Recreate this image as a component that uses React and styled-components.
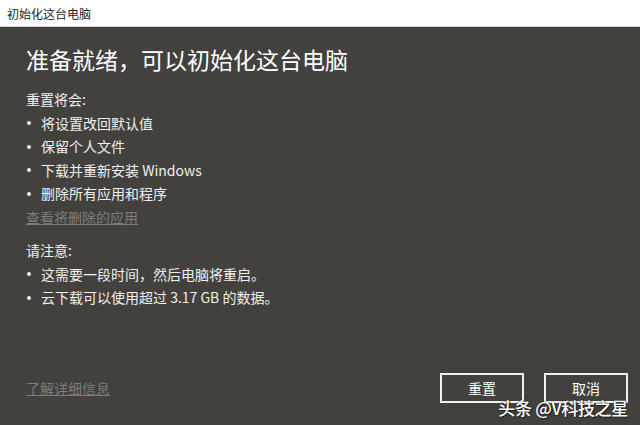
import styled, { createGlobalStyle } from 'styled-components';

const GlobalStyle = createGlobalStyle`
    html, body {
        margin: 0;
        padding: 0;
        background: #42413d;
    }
    body {
        font-family: "Noto Sans CJK SC", "Liberation Sans", sans-serif;
    }
`

const Window = styled.div`
    width: 640px;
    height: 425px;
    display: flex;
    flex-direction: column;
    position: relative;
    overflow: hidden;
`

const TitleBar = styled.div`
    height: 27px;
    background: #ffffff;
    display: flex;
    align-items: center;
    padding-left: 7px;
    font-size: 12px;
    color: #222;
    border-bottom: 1px solid #d8d8d8;
    box-sizing: border-box;
`

const Body = styled.div`
    flex: 1;
    background: #42413d;
    color: #f0f0f0;
    padding: 14px 12px 0 26px;
    display: flex;
    flex-direction: column;
`

const Heading = styled.h1`
    margin: 0;
    font-size: 23px;
    font-weight: 400;
    line-height: 36px;
    color: #ffffff;
`

const SectionLabel = styled.div`
    font-size: 14px;
    line-height: 23.5px;
    margin-top: ${props => props.$top || 0}px;
`

const List = styled.ul`
    list-style: none;
    margin: 0;
    padding: 0;
`

const Item = styled.li`
    font-size: 14px;
    line-height: 23.5px;
    display: flex;
    align-items: center;

    &::before {
        content: '';
        width: 4px;
        height: 4px;
        border-radius: 50%;
        background: #f0f0f0;
        margin: 0 10px 0 1px;
    }
`

const Link = styled.a`
    font-size: 14px;
    line-height: 23.5px;
    color: #7e7d79;
    text-decoration: underline;
    width: fit-content;
    margin-top: ${props => props.$top || 0}px;
`

const Footer = styled.div`
    margin-top: auto;
    height: 60px;
    display: flex;
    align-items: flex-start;
    justify-content: space-between;
    padding-top: 8px;
    box-sizing: border-box;
`

const Buttons = styled.div`
    display: flex;
    gap: 20px;
`

const Button = styled.button`
    width: 84px;
    height: 30px;
    background: transparent;
    border: 2px solid #f2f2f2;
    color: #ffffff;
    font-family: inherit;
    font-size: 14px;
    padding: 0;
`

const Watermark = styled.div`
    position: absolute;
    right: 12px;
    bottom: 5px;
    font-size: 17px;
    font-weight: 500;
    color: #ffffff;
    text-shadow: 0 0 2px #222, 1px 1px 1px #222;
    letter-spacing: -0.3px;
`

export default function App() {
    return (
        <Window>
            <GlobalStyle />
            <TitleBar>初始化这台电脑</TitleBar>
            <Body>
                <Heading>准备就绪，可以初始化这台电脑</Heading>
                <SectionLabel $top={11}>重置将会:</SectionLabel>
                <List>
                    <Item>将设置改回默认值</Item>
                    <Item>保留个人文件</Item>
                    <Item>下载并重新安装 Windows</Item>
                    <Item>删除所有应用和程序</Item>
                </List>
                <Link>查看将删除的应用</Link>
                <SectionLabel $top={10}>请注意:</SectionLabel>
                <List>
                    <Item>这需要一段时间，然后电脑将重启。</Item>
                    <Item>云下载可以使用超过 3.17 GB 的数据。</Item>
                </List>
                <Footer>
                    <Link $top={4}>了解详细信息</Link>
                    <Buttons>
                        <Button>重置</Button>
                        <Button>取消</Button>
                    </Buttons>
                </Footer>
            </Body>
            <Watermark>头条 @V科技之星</Watermark>
        </Window>
    )
}
